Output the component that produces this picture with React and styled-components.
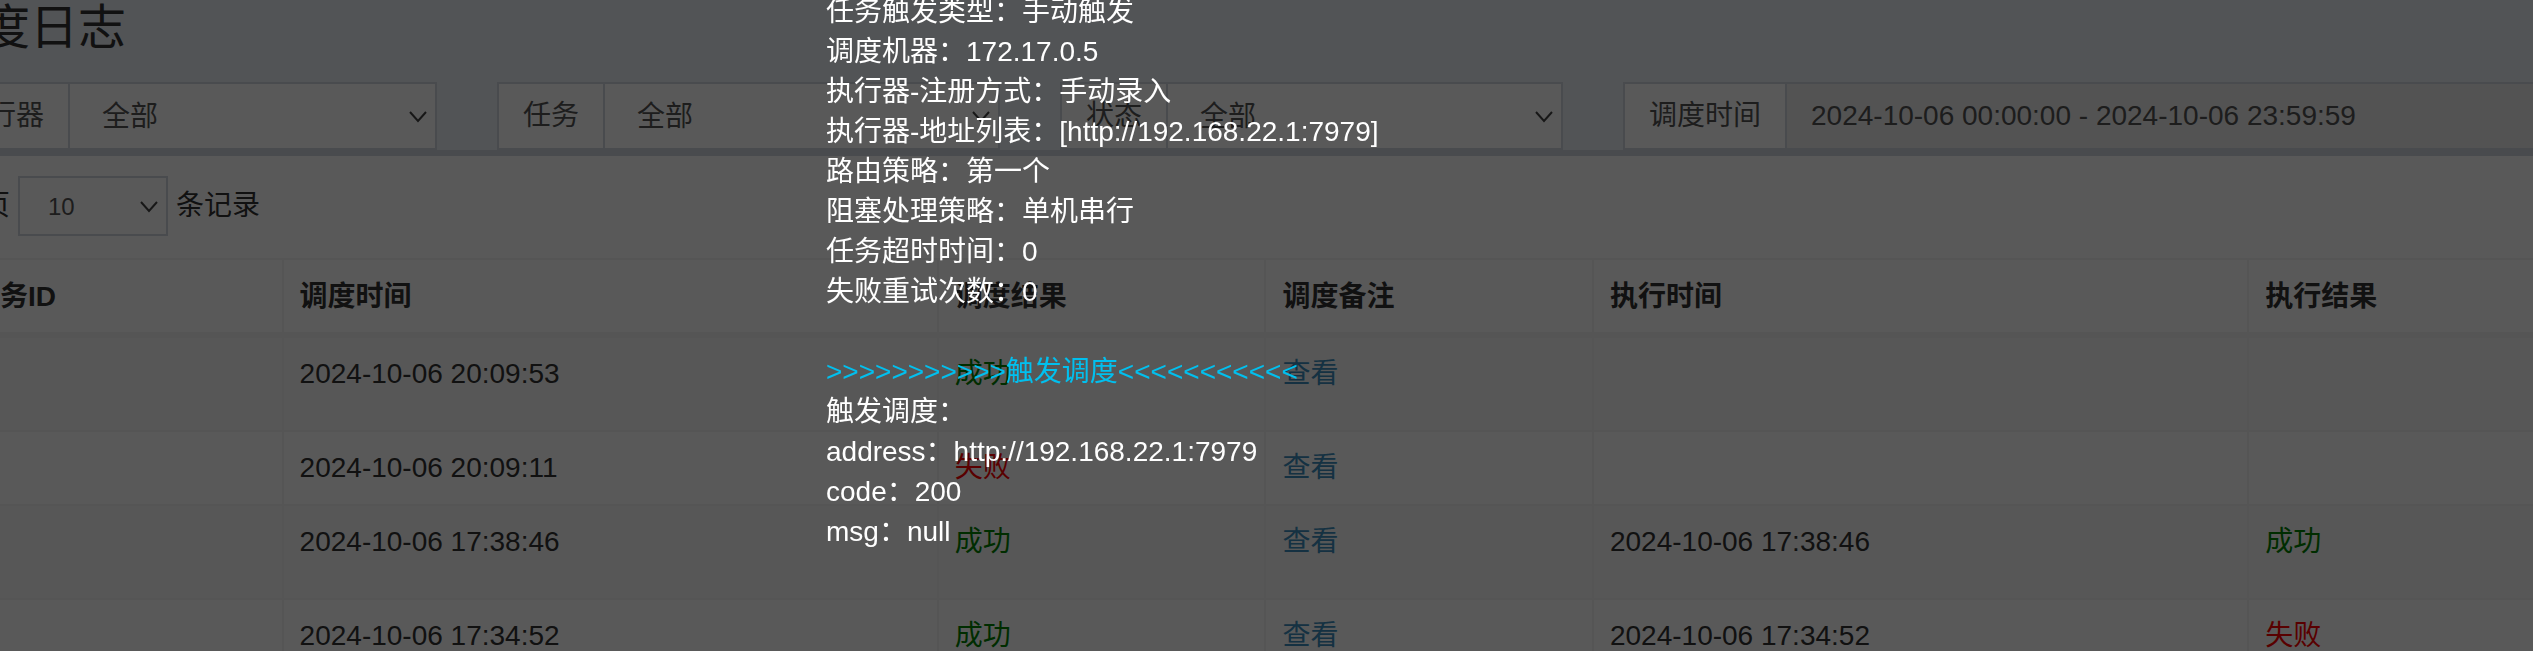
import React from "react";
import styled, { createGlobalStyle } from "styled-components";

const GlobalStyle = createGlobalStyle`
  * { box-sizing: border-box; }
  html, body { margin: 0; overflow: hidden; }
  body, select, input {
    font-family: "Liberation Sans", "Noto Sans CJK SC", sans-serif;
  }
  body {
    background: #ecf0f5;
    color: #333;
    font-size: 28px;
    line-height: 40px;
  }
`;

const Page = styled.div`
  height: 100vh;
  overflow: hidden;
`;

/* The console is wider than the viewport and scrolled a little to the right. */
const Content = styled.main`
  margin: 0 -719px 0 -66px;
`;

const Title = styled.h1`
  margin: 0;
  padding: 4px 0 30px;
  font-size: 48px;
  font-weight: 400;
  line-height: 48px;
`;

const Filters = styled.form`
  display: grid;
  grid-template-columns: repeat(12, minmax(0, 1fr));
  column-gap: 60px;
`;

const Field = styled.div`
  grid-column: span ${(p) => p.$span};
  display: flex;
  height: 68px;
  border: 2px solid #d2d6de;
  background: #fff;
  color: #555;
`;

const FieldLabel = styled.label`
  flex: none;
  padding: 12px 24px;
  border-right: 2px solid #d2d6de;
  white-space: nowrap;
`;

const SelectWrap = styled.div`
  position: relative;
  flex: ${(p) => (p.$small ? "none" : "1")};
  width: ${(p) => (p.$small ? "150px" : "auto")};
  height: ${(p) => (p.$small ? "60px" : "auto")};
  border: ${(p) => (p.$small ? "2px solid #d2d6de" : "0")};
  background: #fff;
  color: #555;
`;

const Select = styled.select`
  appearance: none;
  width: 100%;
  height: 100%;
  padding: 0 ${(p) => (p.$small ? "28px" : "32px")};
  border: 0;
  background: transparent;
  color: inherit;
  font-size: ${(p) => (p.$small ? "24px" : "28px")};
`;

const Arrow = styled.svg`
  position: absolute;
  right: 8px;
  top: calc(50% - 5px);
  width: 18px;
  height: 12px;
  pointer-events: none;
`;

const RangeInput = styled.input`
  flex: 1;
  min-width: 0;
  padding: 0 24px;
  border: 0;
  background: #eee;
  color: inherit;
  font-size: 28px;
`;

const Box = styled.section`
  padding: 20px;
  border-top: 6px solid #d2d6de;
  background: #fff;
`;

const LengthBar = styled.label`
  display: flex;
  align-items: baseline;
  gap: 8px;
  margin-bottom: 22px;
`;

const Table = styled.table`
  width: 100%;
  table-layout: fixed;
  border: 2px solid #f4f4f4;
  border-width: 2px 0 0 2px;
  border-spacing: 0;
`;

const Head = styled.th`
  width: ${(p) => p.$width};
  padding: 17px 16px 15px;
  border: solid #f4f4f4;
  border-width: 0 2px 6px 0;
  text-align: left;
`;

const Row = styled.tr`
  height: ${(p) => (p.$tall ? "94px" : "74px")};
  background: ${(p) => (p.$striped ? "#f9f9f9" : "#fff")};
`;

const Cell = styled.td`
  padding: 16px;
  border: solid #f4f4f4;
  border-width: 0 2px 2px 0;
  vertical-align: top;
`;

const Status = styled.span`
  color: ${(p) => (p.$ok ? "green" : "red")};
`;

const Link = styled.a`
  color: #3c8dbc;
  text-decoration: none;
`;

const Shade = styled.div`
  position: fixed;
  inset: 0;
  overflow: hidden;
  background: rgba(0, 0, 0, 0.65);
`;

const Dialog = styled.div`
  position: absolute;
  top: -8px;
  left: 826px;
  color: #fff;
  white-space: nowrap;
`;

const Line = styled.p`
  margin: 0;
  min-height: 40px;
  color: ${(p) => (p.$accent ? "#00c0ef" : "inherit")};
`;

const columns = [
  ["任务ID", "10%"],
  ["调度时间", "20%"],
  ["调度结果", "10%"],
  ["调度备注", "10%"],
  ["执行时间", "20%"],
  ["执行结果", "30%"],
];

const logs = [
  { trigger: "2024-10-06 20:09:53", triggerOk: true, tall: true },
  { trigger: "2024-10-06 20:09:11", triggerOk: false, tall: false },
  { trigger: "2024-10-06 17:38:46", triggerOk: true, handle: "2024-10-06 17:38:46", handleOk: true, tall: true },
  { trigger: "2024-10-06 17:34:52", triggerOk: true, handle: "2024-10-06 17:34:52", handleOk: false, tall: true },
];

const details = [
  "任务触发类型：手动触发",
  "调度机器：172.17.0.5",
  "执行器-注册方式：手动录入",
  "执行器-地址列表：[http://192.168.22.1:7979]",
  "路由策略：第一个",
  "阻塞处理策略：单机串行",
  "任务超时时间：0",
  "失败重试次数：0",
  "",
  ">>>>>>>>>>>触发调度<<<<<<<<<<<",
  "触发调度：",
  "address：http://192.168.22.1:7979",
  "code：200",
  "msg：null",
];

function Dropdown({ id, value, small }) {
  return (
    <SelectWrap $small={small}>
      <Select id={id} $small={small} defaultValue={value}>
        <option>{value}</option>
      </Select>
      <Arrow viewBox="0 0 18 12" fill="none" stroke="#444" strokeWidth="2" aria-hidden="true">
        <path d="M1 1 L9 10 L17 1" />
      </Arrow>
    </SelectWrap>
  );
}

function Result({ ok }) {
  return <Status $ok={ok}>{ok ? "成功" : "失败"}</Status>;
}

export default function App() {
  return (
    <>
      <GlobalStyle />
      <Page>
        <Content>
          <Title>调度日志</Title>
          <Filters>
            <Field $span={2}>
              <FieldLabel htmlFor="group">执行器</FieldLabel>
              <Dropdown id="group" value="全部" />
            </Field>
            <Field $span={2}>
              <FieldLabel htmlFor="job">任务</FieldLabel>
              <Dropdown id="job" value="全部" />
            </Field>
            <Field $span={2}>
              <FieldLabel htmlFor="status">状态</FieldLabel>
              <Dropdown id="status" value="全部" />
            </Field>
            <Field $span={4}>
              <FieldLabel htmlFor="range">调度时间</FieldLabel>
              <RangeInput id="range" readOnly value="2024-10-06 00:00:00 - 2024-10-06 23:59:59" />
            </Field>
          </Filters>
          <Box>
            <LengthBar htmlFor="length">
              <span>每页</span>
              <Dropdown id="length" value="10" small />
              <span>条记录</span>
            </LengthBar>
            <Table>
              <thead>
                <tr>
                  {columns.map(([name, width]) => (
                    <Head key={name} $width={width}>{name}</Head>
                  ))}
                </tr>
              </thead>
              <tbody>
                {logs.map((log, i) => (
                  <Row key={log.trigger} $tall={log.tall} $striped={i % 2 === 0}>
                    <Cell />
                    <Cell>{log.trigger}</Cell>
                    <Cell><Result ok={log.triggerOk} /></Cell>
                    <Cell><Link href="#detail">查看</Link></Cell>
                    <Cell>{log.handle}</Cell>
                    <Cell>{log.handle && <Result ok={log.handleOk} />}</Cell>
                  </Row>
                ))}
              </tbody>
            </Table>
          </Box>
        </Content>
      </Page>
      <Shade>
        <Dialog role="dialog" aria-label="调度备注">
          {details.map((text, i) => (
            <Line key={i} $accent={text.startsWith(">")}>{text}</Line>
          ))}
        </Dialog>
      </Shade>
    </>
  );
}
